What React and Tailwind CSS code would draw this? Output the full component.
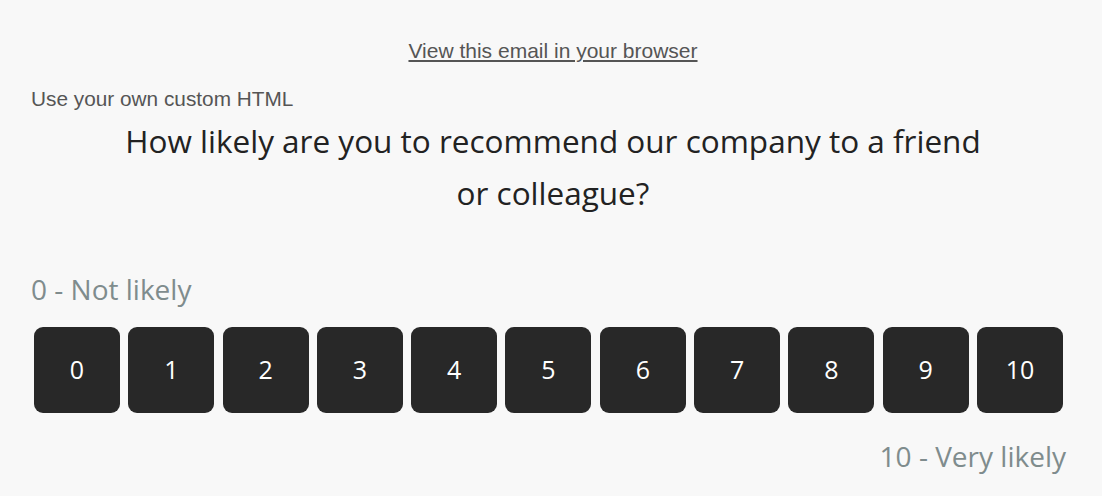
import React from 'react';

const scores = [0, 1, 2, 3, 4, 5, 6, 7, 8, 9, 10];

export default function App() {
  return (
    <div className="w-[1102px] h-[496px] bg-[#f8f8f8] overflow-hidden">
      <div className="pt-[38px] pl-[4px] text-center font-['Liberation_Sans',Arial,sans-serif]">
        <a href="#" className="text-[21px] leading-[26px] text-[#555555] underline">
          View this email in your browser
        </a>
      </div>
      <div className="px-[31px]">
        <p className="mt-[21px] text-[20.8px] leading-[26px] text-[#555555] font-['Liberation_Sans',Arial,sans-serif]">
          Use your own custom HTML
        </p>
        <h1 className="mx-auto mt-[3px] w-[870px] pl-[4px] text-center text-[31.5px] leading-[52px] text-[#222222] font-['Open_Sans',sans-serif]">
          How likely are you to recommend our company to a friend or colleague?
        </h1>
        <div className="font-['Open_Sans',sans-serif]">
          <p className="mt-[52px] text-[28px] leading-[36px] text-[#7f8c8d]">0 - Not likely</p>
          <div className="mt-[20px] flex gap-[8.3px] pl-[3px] pr-[8px]">
            {scores.map((n) => (
              <button
                key={n}
                className="w-[86px] h-[86px] rounded-[9px] bg-[#282828] text-white text-[25px] flex items-center justify-center"
              >
                {n}
              </button>
            ))}
          </div>
          <p className="mt-[25px] pr-[5px] text-right text-[28px] leading-[36px] text-[#7f8c8d]">10 - Very likely</p>
        </div>
      </div>
    </div>
  );
}
